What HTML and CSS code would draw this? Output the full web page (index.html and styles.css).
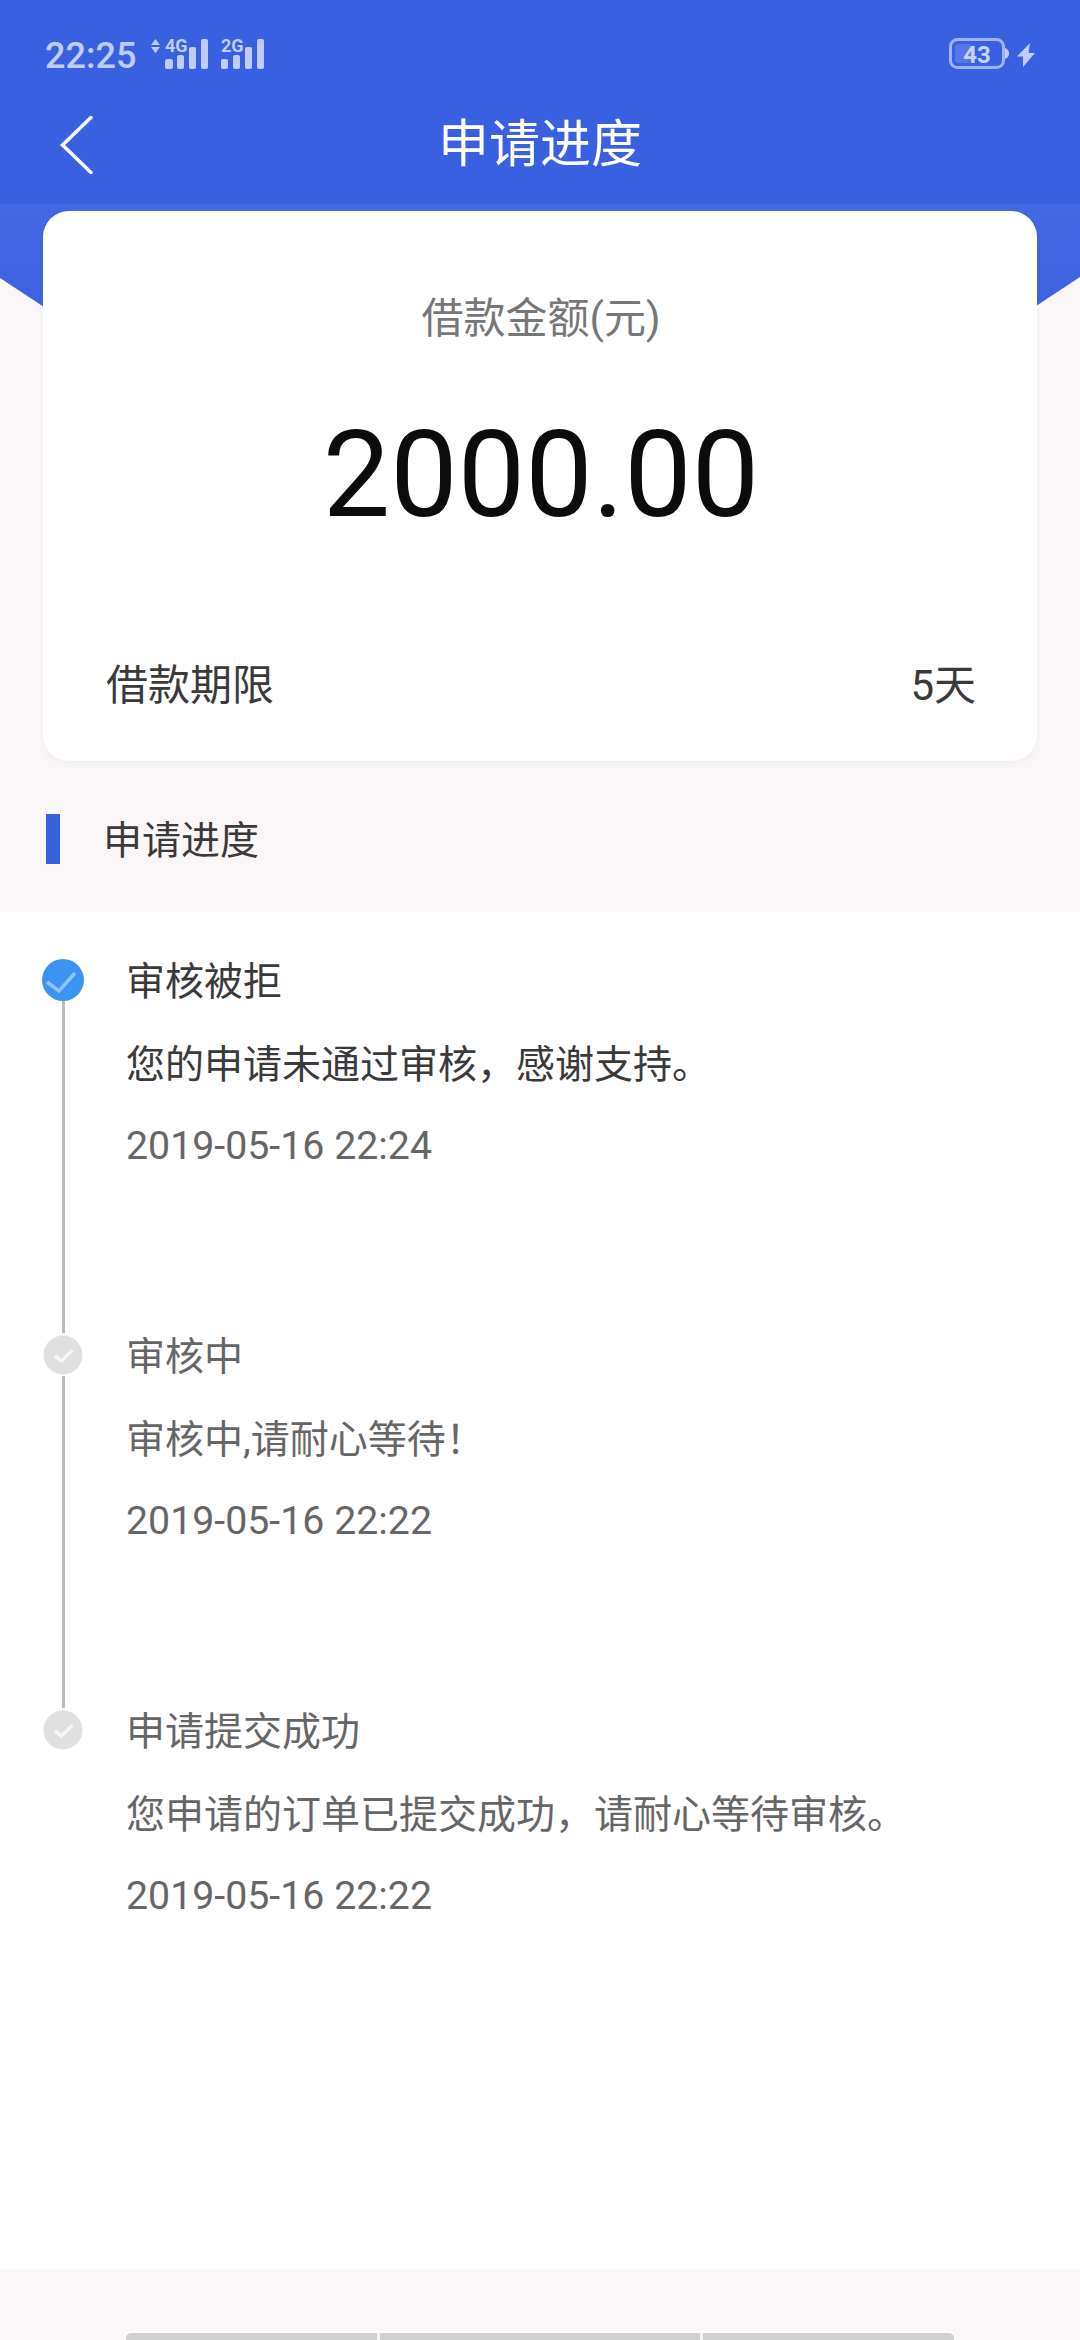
FILE: index.html
```html
<!DOCTYPE html>
<html lang="zh-CN">
<head>
<meta charset="utf-8">
<title>申请进度</title>
<link rel="stylesheet" href="styles.css">
</head>
<body>
<div class="page">
  <header class="header">
    <div class="status">
      <span class="time">22:25</span>
      <svg class="signal signal-a" width="58" height="37" viewBox="0 -6 58 37" aria-hidden="true">
        <path class="glyph" d="M4.5 0 L9 6 H0 Z M0 8 H9 L4.5 14 Z"/>
        <text class="net" x="14" y="13">4G</text>
        <rect class="glyph" x="14" y="20" width="8" height="10" rx="2.5"/>
        <rect class="glyph" x="26" y="16" width="7" height="14" rx="2"/>
        <rect class="glyph" x="38" y="8" width="7" height="22" rx="2"/>
        <rect class="glyph" x="50" y="0" width="7" height="30" rx="2"/>
      </svg>
      <svg class="signal signal-b" width="44" height="37" viewBox="0 -6 44 37" aria-hidden="true">
        <text class="net" x="0" y="13">2G</text>
        <rect class="glyph" x="0" y="20" width="7" height="10" rx="2"/>
        <rect class="glyph" x="12" y="16" width="7" height="14" rx="2"/>
        <rect class="glyph" x="24" y="8" width="7" height="22" rx="2"/>
        <rect class="glyph" x="36" y="0" width="7" height="30" rx="2"/>
      </svg>
      <div class="status-right">
        <svg width="60" height="31" viewBox="0 0 60 31" aria-hidden="true">
          <rect class="batt-body" x="1.5" y="1.5" width="53" height="28" rx="7"/>
          <rect class="batt-fill" x="6" y="6" width="16" height="19" rx="3"/>
          <path class="glyph" d="M56 10 C59 11 60 13 60 15.5 C60 18 59 20 56 21 Z"/>
          <text class="batt-text" x="28" y="25">43</text>
        </svg>
        <svg class="bolt" width="18" height="24" viewBox="0 0 18 24" aria-hidden="true">
          <path class="glyph" d="M13 0 L0 13.5 H6 L6 24 L18 10 H11.5 Z"/>
        </svg>
      </div>
    </div>
    <nav class="nav">
      <div class="nav-left">
        <svg width="33" height="58" viewBox="0 0 33 58" aria-hidden="true">
          <path class="chev" d="M31 1.5 L2.5 29 L31 56.5"/>
        </svg>
      </div>
      <h1 class="nav-title">申请进度</h1>
      <div></div>
    </nav>
  </header>

  <section class="hero">
    <div class="card">
      <div class="card-label">借款金额(元)</div>
      <div class="card-amount">2000.00</div>
      <div class="card-row">
        <span>借款期限</span>
        <span>5天</span>
      </div>
    </div>
  </section>

  <div class="section-head">
    <span class="section-bar"></span>
    <h2 class="section-title">申请进度</h2>
  </div>

  <main class="timeline">
    <article class="item">
      <div class="rail">
        <svg class="node" width="42" height="42" viewBox="0 0 42 42" aria-hidden="true">
          <circle class="node-on" cx="21" cy="21" r="21"/>
          <path class="tick-on" d="M5 23 L17 32 L33 14"/>
        </svg>
        <span class="line"></span>
      </div>
      <div class="body">
        <div class="title title-on">审核被拒</div>
        <div class="msg msg-on">您的申请未通过审核，感谢支持。</div>
        <div class="date">2019-05-16 22:24</div>
      </div>
    </article>
    <article class="item">
      <div class="rail">
        <svg class="node" width="42" height="42" viewBox="0 0 42 42" aria-hidden="true">
          <circle class="node-off" cx="21" cy="21" r="19.5"/>
          <path class="tick-off" d="M13 22 L19.5 27 L30.5 16"/>
        </svg>
        <span class="line"></span>
      </div>
      <div class="body">
        <div class="title">审核中</div>
        <div class="msg">审核中,请耐心等待！</div>
        <div class="date">2019-05-16 22:22</div>
      </div>
    </article>
    <article class="item">
      <div class="rail">
        <svg class="node" width="42" height="42" viewBox="0 0 42 42" aria-hidden="true">
          <circle class="node-off" cx="21" cy="21" r="19.5"/>
          <path class="tick-off" d="M13 22 L19.5 27 L30.5 16"/>
        </svg>
      </div>
      <div class="body">
        <div class="title">申请提交成功</div>
        <div class="msg">您申请的订单已提交成功，请耐心等待审核。</div>
        <div class="date">2019-05-16 22:22</div>
      </div>
    </article>
  </main>

  <footer class="footer">
    <span class="seg seg-a"></span>
    <span class="seg seg-b"></span>
    <span class="seg seg-c"></span>
  </footer>
</div>
</body>
</html>
```
FILE: styles.css
```css
* { box-sizing: border-box; }
html, body { margin: 0; padding: 0; }
body {
  width: 1080px;
  height: 2340px;
  overflow: hidden;
  background: #fbf7f8;
  font-family: "Roboto", "Noto Sans CJK SC", sans-serif;
}
.page {
  width: 1080px;
  height: 2340px;
  display: flex;
  flex-direction: column;
  overflow: hidden;
}

/* header */
.header {
  height: 204px;
  flex: none;
  background: #3a60e2;
  position: relative;
  z-index: 1;
}
.status {
  height: 86px;
  padding: 38px 45px 0 45px;
  display: flex;
  align-items: flex-start;
}
.time {
  font-size: 36px;
  line-height: 36px;
  font-weight: 500;
  color: #bfcdf6;
}
.signal { margin-top: -5px; }
.signal-a { margin-left: 15px; }
.signal-b { margin-left: 12px; }
.status-right {
  margin-left: auto;
  display: flex;
  align-items: center;
  gap: 8px;
}
.glyph { fill: #bfcdf6; }
.net {
  font-family: "Roboto", sans-serif;
  font-size: 18px;
  font-weight: 700;
  fill: #bfcdf6;
}
.batt-body { fill: none; stroke: #9fb3f0; stroke-width: 3; }
.batt-fill { fill: #5877e6; }
.batt-text {
  font-family: "Roboto", sans-serif;
  font-size: 24px;
  font-weight: 700;
  text-anchor: middle;
  fill: #c6d3f7;
}
.bolt { margin-top: 2px; }
.nav {
  height: 118px;
  display: grid;
  grid-template-columns: 1fr auto 1fr;
  align-items: center;
}
.nav-left {
  padding-left: 60px;
  display: flex;
  align-items: center;
}
.chev { fill: none; stroke: #fff; stroke-width: 3.5; stroke-linecap: round; stroke-linejoin: miter; }
.nav-title {
  margin: 0;
  font-size: 51px;
  line-height: 60px;
  font-weight: 400;
  color: #fff;
}

/* hero + card */
.hero {
  position: relative;
  flex: none;
  padding: 7px 43px 0;
}
.hero::before {
  content: "";
  position: absolute;
  left: 0;
  top: 0;
  width: 1080px;
  height: 300px;
  background: linear-gradient(#4467e3, #3a60e2 60%);
  clip-path: polygon(0 0, 100% 0, 100% 73px, 540px 430px, 0 74px);
}
.card {
  position: relative;
  height: 550px;
  background: #fff;
  border-radius: 26px;
  box-shadow: 0 2px 6px rgba(120, 100, 100, 0.07);
  display: flex;
  flex-direction: column;
  align-items: center;
  padding: 79px 61px 0 63px;
}
.card-label {
  font-size: 42px;
  line-height: 58px;
  color: #777;
}
.card-amount {
  margin-top: 57px;
  font-size: 120px;
  line-height: 140px;
  color: #0c0c0c;
}
.card-row {
  width: 100%;
  margin-top: 112px;
  display: flex;
  justify-content: space-between;
  font-size: 42px;
  line-height: 58px;
  color: #3a3a3a;
}

/* section head */
.section-head {
  flex: none;
  height: 151px;
  padding: 53px 0 0 46px;
  display: flex;
  align-items: flex-start;
  gap: 43px;
}
.section-bar {
  width: 14px;
  height: 50px;
  background: #3a60e2;
}
.section-title {
  margin: 0;
  font-size: 39px;
  line-height: 54px;
  font-weight: 400;
  color: #3a3a3a;
}

/* timeline */
.timeline {
  flex: 1;
  background: #fff;
  padding: 47px 0 0 42px;
}
.item {
  height: 375px;
  display: flex;
  gap: 42px;
}
.rail {
  width: 42px;
  display: flex;
  flex-direction: column;
  align-items: center;
}
.node { flex: none; display: block; }
.node-on { fill: #3b95f0; }
.tick-on { fill: none; stroke: #8fc3f7; stroke-width: 3.5; }
.node-off { fill: #e0e0e0; }
.tick-off { fill: none; stroke: #f6f6f6; stroke-width: 3.5; }
.line {
  flex: 1;
  width: 3px;
  margin-bottom: 1px;
  background: #bbb;
}
.body {
  display: flex;
  flex-direction: column;
  gap: 35px;
}
.title, .msg, .date {
  font-size: 39px;
  line-height: 46px;
  color: #666;
}
.date { font-size: 39.3px; }
.msg { margin-top: 2px; }
.title-on, .msg-on { color: #3a3a3a; }

/* footer */
.footer {
  flex: none;
  height: 71px;
  display: flex;
  justify-content: center;
  align-items: flex-end;
  gap: 3px;
}
.seg {
  height: 7px;
  background: #d0d0d0;
  box-shadow: 0 -2px 0 #fff;
}
.seg-a { width: 251px; border-top-left-radius: 5px; }
.seg-b { width: 320px; }
.seg-c { width: 251px; border-top-right-radius: 5px; }
```
